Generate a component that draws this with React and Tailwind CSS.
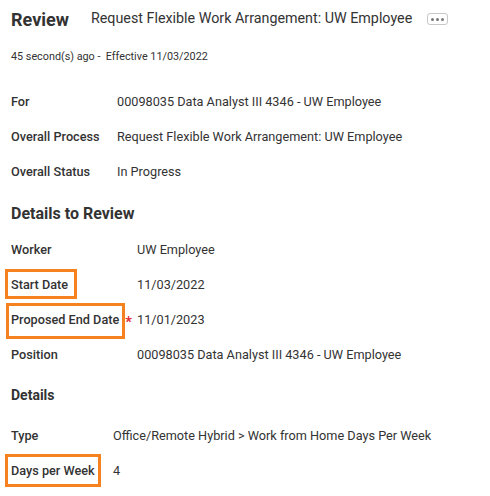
import React from "react";

const Row = ({ label, value, labelWidth, box, star }) => (
  <div className="flex h-[35px] items-center text-[12.7px]">
    <div className="relative flex shrink-0 items-center font-medium text-[#333]" style={{ width: labelWidth }}>
      <span className="relative">
        {label}
        {box && (
          <span
            className={`absolute border-[3px] border-[#f5821f] ${box}`}
          />
        )}
      </span>
      {star && <span className="ml-[6px] translate-y-[3px] text-[15px] leading-none text-[#e0242b]">*</span>}
    </div>
    <div className="text-[#333]">{value}</div>
  </div>
);

export default function App() {
  return (
    <div className="w-[490px] h-[496px] overflow-hidden bg-white pl-[11px] font-['Roboto','Liberation_Sans',sans-serif] text-[#333]">
      <div className="flex h-[38px] items-center">
        <h1 className="text-[18px] font-bold text-[#333]">Review</h1>
        <span className="ml-[22px] text-[14.3px] text-[#333]">
          Request Flexible Work Arrangement: UW Employee
        </span>
        <button className="ml-[15px] flex h-[12px] w-[21px] items-center justify-center gap-[2px] rounded-[3px] border border-[#c8c8c8] bg-white">
          <span className="h-[3px] w-[3px] rounded-full bg-[#777]" />
          <span className="h-[3px] w-[3px] rounded-full bg-[#777]" />
          <span className="h-[3px] w-[3px] rounded-full bg-[#777]" />
        </button>
      </div>
      <div className="flex h-[38px] items-center text-[10.8px] text-[#333]">
        45 second(s) ago -&nbsp; Effective 11/03/2022
      </div>

      <div className="mt-[8px]">
        <Row label="For" value="00098035 Data Analyst III 4346 - UW Employee" labelWidth={106} />
        <Row label="Overall Process" value="Request Flexible Work Arrangement: UW Employee" labelWidth={106} />
        <Row label="Overall Status" value="In Progress" labelWidth={106} />
      </div>

      <h2 className="mt-[7px] flex h-[36px] items-center text-[16px] font-bold text-[#333]">
        Details to Review
      </h2>
      <div>
        <Row label="Worker" value="UW Employee" labelWidth={126} />
        <Row
          label="Start Date"
          value="11/03/2022"
          labelWidth={126}
          box="-left-[6px] -right-[9px] -top-[6px] -bottom-[5px]"
        />
        <Row
          label="Proposed End Date"
          value="11/01/2023"
          labelWidth={126}
          star
          box="-left-[5px] -right-[6px] -top-[7px] -bottom-[10px]"
        />
        <Row label="Position" value="00098035 Data Analyst III 4346 - UW Employee" labelWidth={126} />
      </div>

      <h3 className="flex h-[46px] items-center text-[14px] font-bold text-[#333]">Details</h3>
      <div>
        <Row label="Type" value="Office/Remote Hybrid > Work from Home Days Per Week" labelWidth={102} />
        <Row
          label="Days per Week"
          value="4"
          labelWidth={102}
          box="-left-[6px] -right-[6px] -top-[7px] -bottom-[7px]"
        />
      </div>
    </div>
  );
}
